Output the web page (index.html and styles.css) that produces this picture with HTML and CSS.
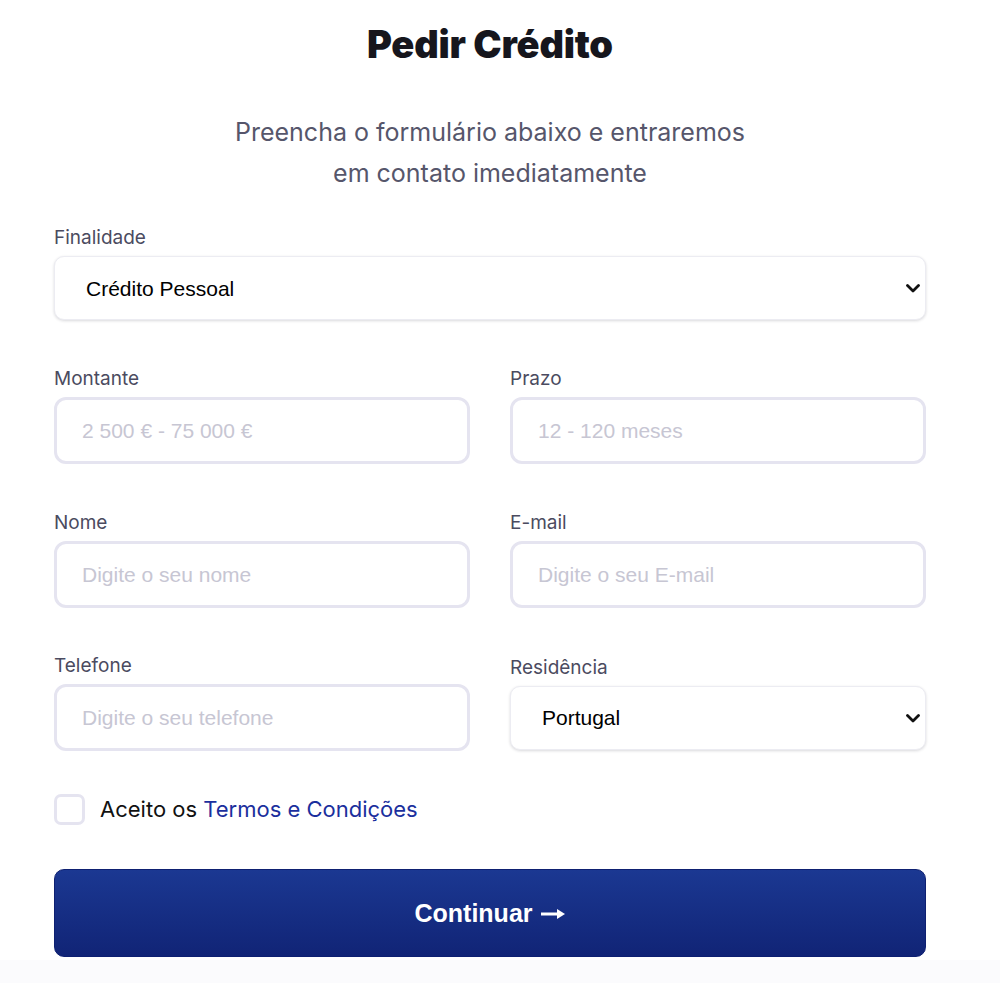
FILE: index.html
```html
<!DOCTYPE html>
<html lang="pt">
<head>
<meta charset="utf-8">
<title>Pedir Crédito</title>
<link rel="stylesheet" href="styles.css">
</head>
<body>
<section class="page">
  <div class="container">
    <h1 class="title">Pedir Crédito</h1>
    <p class="subtitle">Preencha o formulário abaixo e entraremos em contato imediatamente</p>

    <form class="form">
      <div class="field">
        <label class="label">Finalidade</label>
        <div class="select-wrap">
          <select class="select">
            <option>Crédito Pessoal</option>
            <option>Crédito Automóvel</option>
            <option>Crédito Habitação</option>
          </select>
          <svg class="chevron" viewBox="0 0 14 9" width="14" height="9"><path d="M1.5 1.5 L7 7 L12.5 1.5" fill="none" stroke="#111" stroke-width="2.8" stroke-linecap="round" stroke-linejoin="round"/></svg>
        </div>
      </div>

      <div class="row">
        <div class="field">
          <label class="label">Montante</label>
          <input class="input" type="text" placeholder="2 500 € - 75 000 €">
        </div>
        <div class="field">
          <label class="label">Prazo</label>
          <input class="input" type="text" placeholder="12 - 120 meses">
        </div>
      </div>

      <div class="row">
        <div class="field">
          <label class="label">Nome</label>
          <input class="input" type="text" placeholder="Digite o seu nome">
        </div>
        <div class="field">
          <label class="label">E-mail</label>
          <input class="input" type="text" placeholder="Digite o seu E-mail">
        </div>
      </div>

      <div class="row row-center">
        <div class="field">
          <label class="label">Telefone</label>
          <input class="input" type="text" placeholder="Digite o seu telefone">
        </div>
        <div class="field">
          <label class="label">Residência</label>
          <div class="select-wrap">
            <select class="select">
              <option>Portugal</option>
              <option>Espanha</option>
            </select>
            <svg class="chevron" viewBox="0 0 14 9" width="14" height="9"><path d="M1.5 1.5 L7 7 L12.5 1.5" fill="none" stroke="#111" stroke-width="2.8" stroke-linecap="round" stroke-linejoin="round"/></svg>
          </div>
        </div>
      </div>

      <label class="check">
        <input type="checkbox" class="check-input">
        <span class="check-box"></span>
        <span class="check-text">Aceito os <a href="#" class="link">Termos e Condições</a></span>
      </label>

      <button type="button" class="button">
        <span>Continuar</span>
        <svg class="arrow" viewBox="0 0 26 12" width="26" height="12"><path d="M1 6 H18" stroke="#fff" stroke-width="3"/><path d="M17 1 L25 6 L17 11 Z" fill="#fff"/></svg>
      </button>
    </form>
  </div>
</section>
</body>
</html>
```

FILE: styles.css
```css
html, body {
  margin: 0;
  padding: 0;
}

body {
  background: #fbfbfd;
  font-family: "Inter", "Liberation Sans", sans-serif;
}

.page {
  background: #ffffff;
  padding: 21px 0 3px;
}

.container {
  width: 872px;
  margin-left: 54px;
}

.title {
  margin: 0;
  text-align: center;
  font-size: 38px;
  line-height: 46px;
  font-weight: 900;
  color: #16161d;
  letter-spacing: -0.2px;
}

.subtitle {
  margin: 45px auto 0;
  max-width: 525px;
  text-align: center;
  font-size: 25px;
  line-height: 41px;
  font-weight: 400;
  color: #56566b;
}

.form {
  margin-top: 33px;
  display: flex;
  flex-direction: column;
}

.row {
  display: grid;
  grid-template-columns: 1fr 1fr;
  column-gap: 40px;
  margin-top: 48px;
}

.row-center {
  align-items: center;
  margin-top: 47px;
}

.field {
  display: flex;
  flex-direction: column;
}

.label {
  font-size: 19px;
  line-height: 22px;
  color: #4b4b60;
  margin-bottom: 7px;
}

.select-wrap {
  position: relative;
}

.select {
  -webkit-appearance: none;
  appearance: none;
  width: 100%;
  height: 64px;
  box-sizing: border-box;
  border: 1px solid #ececf2;
  border-radius: 10px;
  background: #ffffff;
  box-shadow: 0 1px 3px rgba(20, 20, 40, 0.16);
  padding: 0 40px 0 31px;
  font-family: "Liberation Sans", Arial, sans-serif;
  font-size: 21px;
  color: #000000;
  outline: none;
}

.chevron {
  position: absolute;
  right: 6px;
  top: 50%;
  margin-top: -4px;
  pointer-events: none;
}

.input {
  width: 100%;
  height: 67px;
  box-sizing: border-box;
  border: 3px solid #e5e4f0;
  border-radius: 12px;
  background: #ffffff;
  padding: 0 25px;
  font-family: "Liberation Sans", Arial, sans-serif;
  font-size: 21px;
  color: #000000;
  outline: none;
}

.input::placeholder {
  color: #c7c6d3;
}

.check {
  margin-top: 43px;
  display: flex;
  align-items: center;
  gap: 15px;
  cursor: pointer;
}

.check-input {
  display: none;
}

.check-box {
  width: 31px;
  height: 31px;
  box-sizing: border-box;
  border: 3px solid #e5e4f0;
  border-radius: 7px;
  background: #ffffff;
}

.check-text {
  font-size: 22px;
  line-height: 31px;
  color: #111111;
}

.link {
  color: #1b2f9d;
  text-decoration: none;
}

.button {
  margin-top: 44px;
  height: 88px;
  width: 100%;
  border: 1px solid #0e2071;
  border-radius: 10px;
  background: linear-gradient(180deg, #1b3892 0%, #112476 100%);
  color: #ffffff;
  font-family: "Liberation Sans", Arial, sans-serif;
  font-size: 25px;
  font-weight: 700;
  display: flex;
  align-items: center;
  justify-content: center;
  gap: 7px;
  cursor: pointer;
}

.arrow {
  margin-top: 2px;
}
```
